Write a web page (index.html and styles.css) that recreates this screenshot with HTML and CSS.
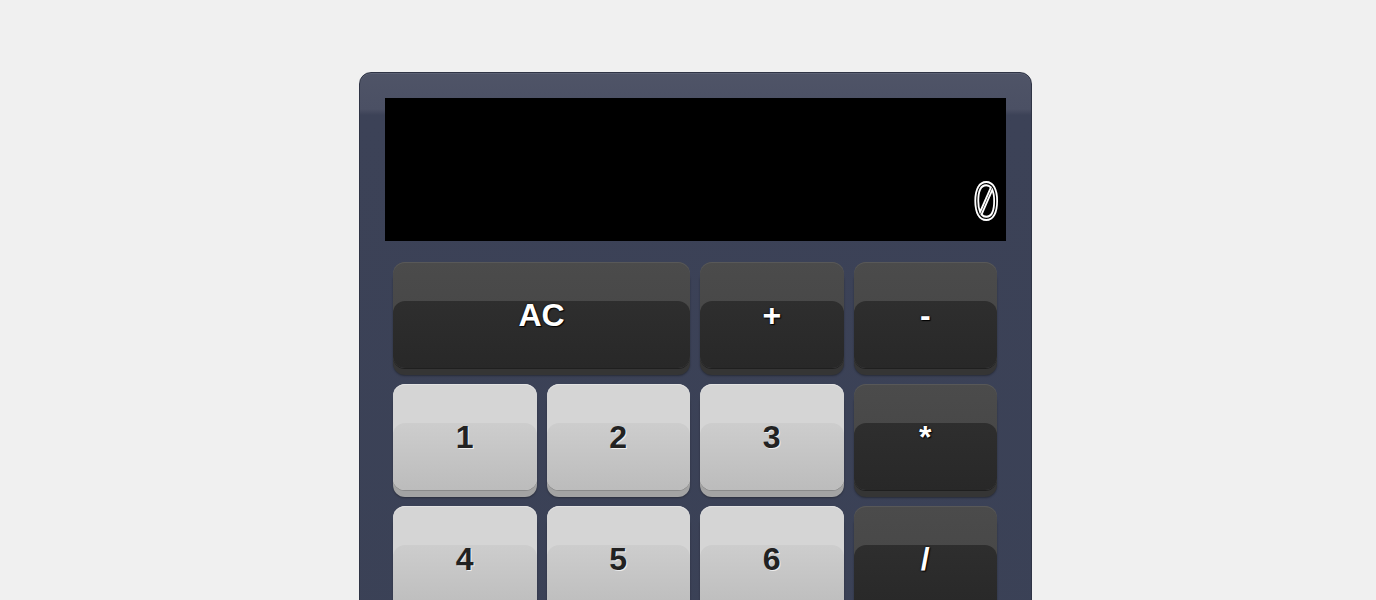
FILE: index.html
```html
<!DOCTYPE html>
<html lang="en">
<head>
<meta charset="utf-8">
<title>Calculator</title>
<link rel="stylesheet" href="styles.css">
</head>
<body>
<div class="page">
  <div class="calculator">
    <div class="display"><span class="digits">0</span></div>
    <div class="keypad">
      <button class="key dark wide">AC</button>
      <button class="key dark">+</button>
      <button class="key dark">-</button>
      <button class="key light">1</button>
      <button class="key light">2</button>
      <button class="key light">3</button>
      <button class="key dark">*</button>
      <button class="key light">4</button>
      <button class="key light">5</button>
      <button class="key light">6</button>
      <button class="key dark">/</button>
      <button class="key light">7</button>
      <button class="key light">8</button>
      <button class="key light">9</button>
      <button class="key dark">=</button>
    </div>
  </div>
</div>
</body>
</html>
```
FILE: styles.css
```css
html, body {
  margin: 0;
  padding: 0;
  background: #f0f0f0;
  font-family: "Liberation Sans", Arial, sans-serif;
}
.page {
  display: flex;
  justify-content: center;
  padding: 72px 0 0 15px;
}
.calculator {
  width: 673px;
  box-sizing: border-box;
  padding: 25px 25px 40px 25px;
  border: 1px solid #2f3445;
  border-radius: 12px;
  background: linear-gradient(#4f5467 0, #4b5064 36px, #3c4257 42px, #3a4156 100%);
  box-shadow: inset 0 1px 0 #5c6174;
}
.display {
  height: 143px;
  background: #000;
  display: flex;
  align-items: flex-end;
  justify-content: flex-end;
  padding: 0 5px 20px 0;
  box-sizing: border-box;
}
.digits {
  font-family: Inter, "DejaVu Sans", sans-serif;
  font-feature-settings: "zero" 1, "tnum" 1;
  font-variant-numeric: slashed-zero tabular-nums;
  font-weight: 300;
  font-size: 52px;
  line-height: 38px;
  height: 38px;
  color: #000;
  -webkit-text-stroke: 2px #fff;
  display: inline-block;
  transform: scaleX(0.86);
  transform-origin: right bottom;
}
.keypad {
  display: grid;
  grid-template-columns: repeat(4, 1fr);
  column-gap: 10px;
  row-gap: 16px;
  margin: 21px 9px 0 8px;
}
.key {
  position: relative;
  isolation: isolate;
  height: 106px;
  border: none;
  border-radius: 12px;
  font-family: "Liberation Sans", Arial, sans-serif;
  font-weight: bold;
  font-size: 32px;
  padding: 0;
}
.key::after {
  content: "";
  position: absolute;
  left: 0;
  right: 0;
  top: 39px;
  bottom: 0;
  border-radius: 12px;
  z-index: -1;
}
.wide {
  grid-column: span 2;
}
.dark {
  color: #fff;
  background: linear-gradient(#4b4b4b, #444);
  box-shadow: inset 0 1px 0 #585858, 0 1px 0 #1f1f1f, 0 7px 0 #353535, 0 8px 2px rgba(0,0,0,0.35);
  text-shadow: 0 0 2px #000, 1px 1px 1px #000;
}
.dark::after {
  background: linear-gradient(#2e2e2e, #282828);
}
.light {
  color: #222;
  background: #d5d5d5;
  box-shadow: inset 0 1px 0 #e2e2e2, 0 1px 0 #8a8a8a, 0 7px 0 #a3a3a3, 0 8px 2px rgba(0,0,0,0.3);
  text-shadow: 1px 1px 0 #eee;
}
.light::after {
  background: linear-gradient(#cdcdcd, #bcbcbc);
}
```
